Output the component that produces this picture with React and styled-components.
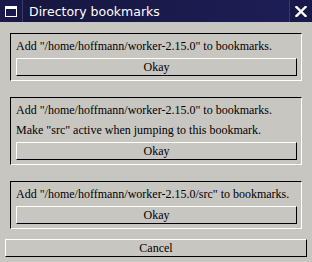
import styled, { createGlobalStyle } from "styled-components";

const Global = createGlobalStyle`
  html, body {
    margin: 0;
    padding: 0;
    background: #c8c6c0;
  }
`

const Window = styled.div`
  width: 312px;
  height: 262px;
  background: #c8c6c0;
  display: flex;
  flex-direction: column;
  color: #000;
`

const TitleBar = styled.div`
  height: 22px;
  display: flex;
  align-items: stretch;
  background: linear-gradient(to right, #16163e, #1e1e58);
  color: #fff;
  flex-shrink: 0;
`

const TitleButton = styled.div`
  width: 22px;
  display: flex;
  align-items: center;
  justify-content: center;
  background: #18184a;
  border-${p => p.$side === 'left' ? 'right' : 'left'}: 1px solid #3a3a6a;
`

const Title = styled.div`
  flex: 1;
  display: flex;
  align-items: center;
  padding-left: 6px;
  font-family: "DejaVu Sans", sans-serif;
  font-size: 12.5px;
`

const Body = styled.div`
  display: flex;
  flex-direction: column;
  padding: 11px 5px 0;
  gap: 16px;
`

const Group = styled.div`
  margin: 0 5px;
  border-top: 1px solid #000;
  border-left: 1px solid #000;
  border-bottom: 1px solid #fff;
  border-right: 1px solid #fff;
  padding: 4px 4px 4px 5px;
  display: flex;
  flex-direction: column;
`

const Line = styled.div`
  font-family: "Liberation Serif", serif;
  font-size: 12px;
  line-height: 17px;
  padding-bottom: 3px;
  white-space: nowrap;
`

const Button = styled.button`
  display: block;
  width: 100%;
  height: 18px;
  margin: 0;
  padding: 0;
  background: #c8c6c0;
  border-top: 1px solid #fff;
  border-left: 1px solid #fff;
  border-bottom: 1px solid #000;
  border-right: 1px solid #000;
  font-family: "Liberation Serif", serif;
  font-size: 12px;
  line-height: 16px;
  color: #000;
  text-align: center;
`

const CancelRow = styled.div`
  margin-top: -6px;
`

function WindowIcon() {
  return <svg width="12" height="11" viewBox="0 0 12 11">
    <rect x="0.5" y="0.5" width="11" height="10" fill="none" stroke="#fff" strokeWidth="1"/>
    <rect x="0" y="0" width="12" height="3" fill="#fff"/>
  </svg>
}

function CloseIcon() {
  return <svg width="12" height="11" viewBox="0 0 12 11">
    <path d="M1.5 1 L10.5 10 M10.5 1 L1.5 10" stroke="#fff" strokeWidth="2.4" strokeLinecap="square"/>
  </svg>
}

const bookmarks = [
  { lines: ['Add "/home/hoffmann/worker-2.15.0" to bookmarks.'] },
  { lines: ['Add "/home/hoffmann/worker-2.15.0" to bookmarks.', 'Make "src" active when jumping to this bookmark.'] },
  { lines: ['Add "/home/hoffmann/worker-2.15.0/src" to bookmarks.'] },
]

export default function App() {
  return <Window>
    <Global />
    <TitleBar>
      <TitleButton $side="left"><WindowIcon /></TitleButton>
      <Title>Directory bookmarks</Title>
      <TitleButton $side="right"><CloseIcon /></TitleButton>
    </TitleBar>
    <Body>
      {bookmarks.map((b, i) => <Group key={i}>
        {b.lines.map((l, j) => <Line key={j}>{l}</Line>)}
        <Button>Okay</Button>
      </Group>)}
      <CancelRow><Button>Cancel</Button></CancelRow>
    </Body>
  </Window>
}
